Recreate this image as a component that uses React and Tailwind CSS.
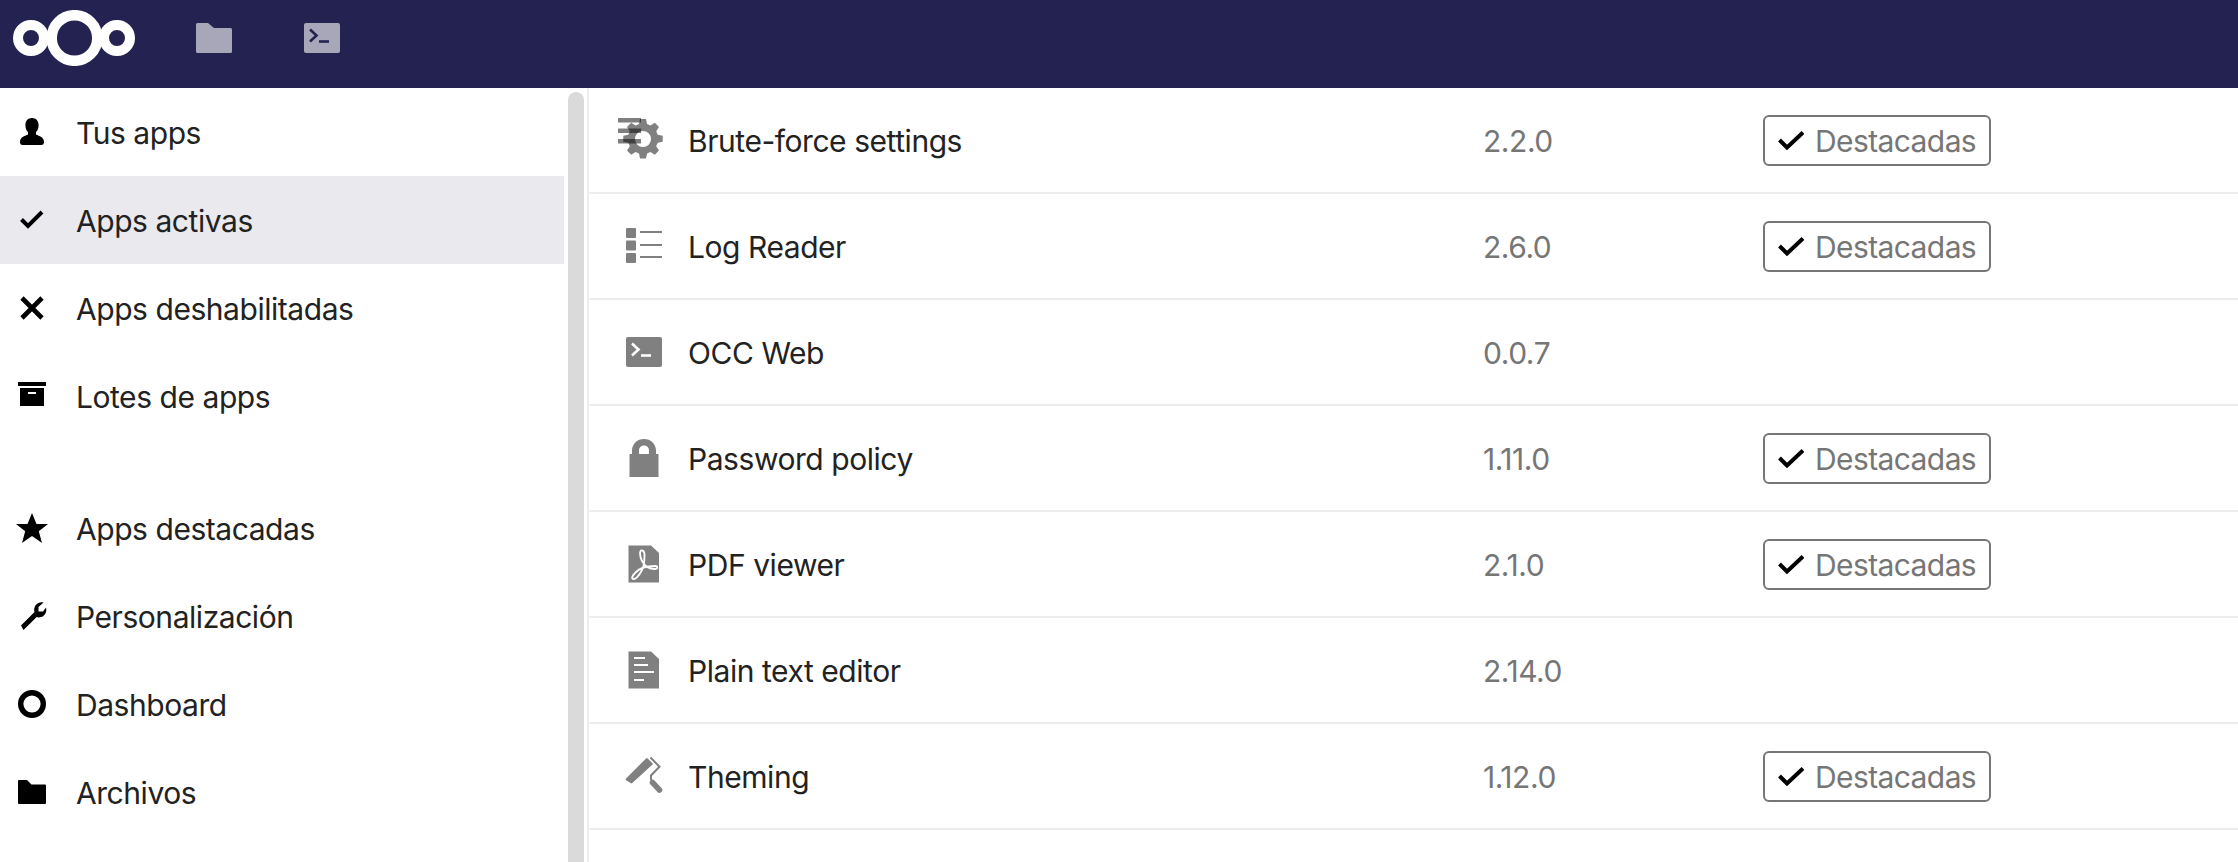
import React from 'react';

const GREY = '#808080';

// sidebar glyphs, 32x32 box
const navIcons = {
  user: <path d="M16 4c-4 0-6.600 2.800-6.600 7.200 0 3 1 5.200 2.600 6.800v2.400C8.600 22 4 22.800 4 28c0 2 1 3 2.600 3h18.800c1.600 0 2.600-1 2.600-3 0-5.200-4.600-6-8-7.600V18c1.600-1.600 2.600-3.800 2.600-6.800C22.600 6.800 20 4 16 4z" transform="translate(0 -2)" />,
  check: <path d="M5.500 15.500l6.500 6.500L26 8" fill="none" stroke="#000" strokeWidth="4" />,
  close: <path d="M6 6l20 20M26 6L6 26" fill="none" stroke="#000" strokeWidth="4.600" />,
  archive: <path fillRule="evenodd" d="M2 2h28v4H2zM4 8h24v18H4zM12 12v2h8v-2z" />,
  star: <path d="M16 1l4.500 11h11.500l-9.200 7.200L26 31l-10-7-10 7 3.200-11.800L0 12h11.500z" />,
  wrench: <path d="M5 25.500L18.500 12c-1-3.500.5-7.500 4-9 1.500-.7 3.500-.9 5-.4l-5 4.400v4.500h4.500l3-4c1 3-.1 6.500-2.700 8.500-2.100 1.500-4.500 1.800-6.600 1.100L7.500 30z" />,
  circle: <circle cx="16" cy="16" r="11.300" fill="none" stroke="#000" strokeWidth="5.400" />,
  folder: <path d="M3 4h8l4.500 4.500H29a1 1 0 0 1 1 1V27a1 1 0 0 1-1 1H3a1 1 0 0 1-1-1V5a1 1 0 0 1 1-1z" />,
};

const navTop = [
  { id: 'user', label: 'Tus apps' },
  { id: 'check', label: 'Apps activas', active: true },
  { id: 'close', label: 'Apps deshabilitadas' },
  { id: 'archive', label: 'Lotes de apps' },
];

const navBottom = [
  { id: 'star', label: 'Apps destacadas' },
  { id: 'wrench', label: 'Personalización' },
  { id: 'circle', label: 'Dashboard' },
  { id: 'folder', label: 'Archivos' },
];

function Terminal({ color, bg }) {
  return (
    <>
      <rect x="0" y="0" width="36" height="30" rx="2" fill={color} />
      <path d="M6 6.500l6.500 6-6.500 6" fill="none" stroke={bg} strokeWidth="2.600" />
      <path d="M15 18.500h10" fill="none" stroke={bg} strokeWidth="2.600" />
    </>
  );
}

// app list glyphs, 48x48 box
const appIcons = {
  brute: (
    <>
      <path
        fill={GREY}
        fillRule="evenodd"
        transform="translate(0 -0.500)"
        d="M20 3.500h6l1 5 3.500 1.500 4.300-2.800 4.200 4.200-2.800 4.300 1.500 3.500 5 1v6l-5 1-1.500 3.500 2.800 4.300-4.200 4.200-4.300-2.800-3.500 1.500-1 5h-6l-1-5-3.500-1.500-4.300 2.800-4.200-4.200 2.800-4.300-1.500-3.500-5-1v-6l5-1 1.500-3.500L7 11.400l4.200-4.200 4.300 2.800L19 8.500zM23 15.500a8 8 0 1 0 0 16 8 8 0 0 0 0-16z"
      />
      <g fill="#000" fillOpacity="0.5">
        <rect x="-2" y="2" width="23" height="4.500" />
        <rect x="-2" y="12.500" width="23" height="4.500" />
        <rect x="-2" y="23" width="23" height="4.500" />
      </g>
    </>
  ),
  log: (
    <g fill={GREY}>
      <rect x="6" y="6" width="10" height="10" rx="1" />
      <rect x="6" y="18.500" width="10" height="10" rx="1" />
      <rect x="6" y="31" width="10" height="10" rx="1" />
      <rect x="20" y="9" width="22" height="2" />
      <rect x="20" y="22" width="22" height="2" />
      <rect x="20" y="34" width="22" height="2" />
    </g>
  ),
  occ: (
    <g transform="translate(6 9)">
      <Terminal color={GREY} bg="#fff" />
    </g>
  ),
  lock: (
    <path
      fill={GREY}
      fillRule="evenodd"
      d="M24 5c-6.600 0-12 4.800-12 11.500V20H9.500v23h29V20H36v-3.500C36 9.800 30.600 5 24 5zm0 6.500c3 0 5 2.200 5 5V20H19v-3.500c0-2.800 2-5 5-5z"
    />
  ),
  pdf: (
    <>
      <path fill={GREY} d="M8.500 5.500H31l8 7.500v29.500H8.500z" />
      <path
        fill="none"
        stroke="#fff"
        strokeWidth="1.800"
        d="M21.500 10.500C19.500 10.500 19.500 16 22 21C25 27 30 29 35 29C38 29 38 26 35 26C28 26 20 28 16 32C13 35 11 38 13 39C15 40 19 36 22 30C24 26 24.500 20 24.500 15C24.500 12 23.500 10.500 21.500 10.500z"
      />
    </>
  ),
  text: (
    <>
      <path fill={GREY} d="M8.500 5.500H31l8 7.500v29.500H8.500z" />
      <g fill="#fff">
        <rect x="14" y="11" width="11" height="2" />
        <rect x="14" y="18" width="14" height="2" />
        <rect x="14" y="25" width="20" height="2" />
        <rect x="14" y="33" width="10" height="2" />
      </g>
    </>
  ),
  theming: (
    <g>
      <path fill={GREY} d="M6 26.500L26 6.500c.5-.5 1.200-.5 1.700 0l4.600 4.600c.5.500.5 1.200 0 1.700L12.300 31c-.5.500-1.200.500-1.700 0L6 28.200c-.5-.5-.5-1.200 0-1.700z" />
      <path fill="none" stroke={GREY} strokeWidth="2" d="M30.500 5.500l9 9.200L31 23.500v5" />
      <path fill="none" stroke={GREY} strokeWidth="5.500" strokeLinecap="round" d="M32.500 30.500l7 7.500" />
    </g>
  ),
};

const apps = [
  { id: 'brute', name: 'Brute-force settings', version: '2.2.0', featured: true },
  { id: 'log', name: 'Log Reader', version: '2.6.0', featured: true },
  { id: 'occ', name: 'OCC Web', version: '0.0.7' },
  { id: 'lock', name: 'Password policy', version: '1.11.0', featured: true },
  { id: 'pdf', name: 'PDF viewer', version: '2.1.0', featured: true },
  { id: 'text', name: 'Plain text editor', version: '2.14.0' },
  { id: 'theming', name: 'Theming', version: '1.12.0', featured: true },
];

function NavItem({ item }) {
  return (
    <div className={`flex h-[88px] items-center pl-4 ${item.active ? 'bg-[#e9e9ee]' : ''}`}>
      <svg viewBox="0 0 32 32" className="h-8 w-8 shrink-0">{navIcons[item.id]}</svg>
      <span className="ml-[28px] pt-[3px] text-[#222]">{item.label}</span>
    </div>
  );
}

function AppRow({ app }) {
  return (
    <div className="flex h-[106px] items-center border-b-2 border-[#ededed] pl-[31px]">
      <svg viewBox="0 0 48 48" className="h-12 w-12 shrink-0 overflow-visible">{appIcons[app.id]}</svg>
      <span className="ml-5 w-[795px] pt-[3px] text-[#222]">{app.name}</span>
      <span className="w-[280px] pt-[3px] text-[#767676]">{app.version}</span>
      {app.featured && (
        <span className="flex h-[51px] w-[228px] items-center rounded-md border-2 border-[#767676] pl-[13px] text-[#767676]">
          <svg viewBox="0 0 26 20" className="h-5 w-[26px] shrink-0">
            <path d="M1.500 10l7.500 7.500L25 2.500" fill="none" stroke="#000" strokeWidth="4" />
          </svg>
          <span className="ml-[11px] pt-[3px] tracking-[-0.6px]">Destacadas</span>
        </span>
      )}
    </div>
  );
}

export default function App() {
  return (
    <div className="flex h-[862px] flex-col overflow-hidden bg-white font-['Inter',sans-serif] text-[30px] tracking-[-0.45px]">
      <header className="flex h-[88px] shrink-0 items-center bg-[#232250] pb-3 pl-[13px]">
        <svg viewBox="0 0 122 56" className="h-14 w-[122px]">
          <g fill="none" stroke="#fff">
            <circle cx="61.500" cy="28" r="22.800" strokeWidth="10.500" />
            <circle cx="18" cy="28" r="13" strokeWidth="10" />
            <circle cx="104" cy="28" r="13" strokeWidth="10" />
          </g>
        </svg>
        <svg viewBox="0 0 36 30" className="ml-[61px] h-[30px] w-9">
          <path fill="#a7a7b9" d="M1.500 0H12l6 5h16.500A1.500 1.500 0 0 1 36 6.500v22a1.500 1.500 0 0 1-1.500 1.500h-33A1.500 1.500 0 0 1 0 28.500v-27A1.500 1.500 0 0 1 1.500 0z" />
        </svg>
        <svg viewBox="0 0 36 30" className="ml-[72px] h-[30px] w-9">
          <Terminal color="#a7a7b9" bg="#232250" />
        </svg>
      </header>
      <div className="flex min-h-0 flex-1">
        <nav className="w-[564px] shrink-0">
          {navTop.map((item) => <NavItem key={item.id} item={item} />)}
          <div className="h-11" />
          {navBottom.map((item) => <NavItem key={item.id} item={item} />)}
        </nav>
        <div className="ml-1 mt-1 w-4 shrink-0 rounded-t-lg bg-[#dadada]" />
        <main className="ml-[3px] flex-1 border-l-2 border-[#ededed]">
          {apps.map((app) => <AppRow key={app.id} app={app} />)}
        </main>
      </div>
    </div>
  );
}
